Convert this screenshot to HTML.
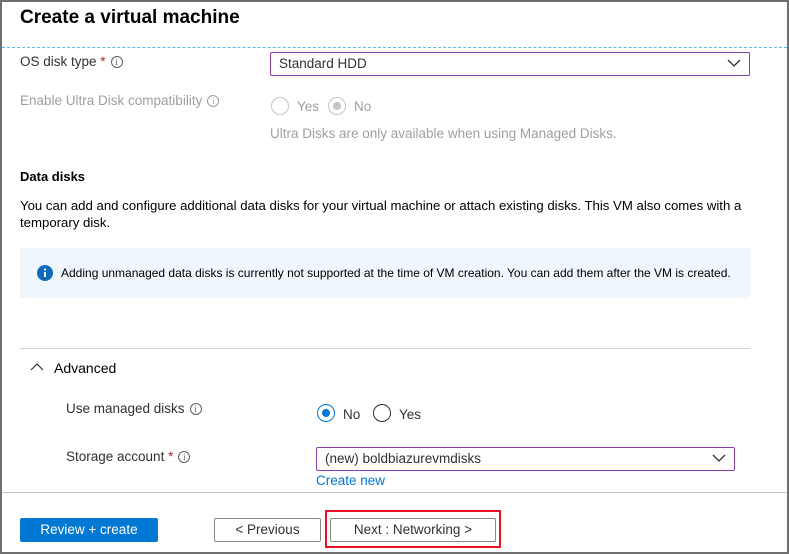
<!DOCTYPE html>
<html><head><style>
*{margin:0;padding:0;box-sizing:border-box}
body{width:789px;height:554px;overflow:hidden;background:#fff;font-family:"Liberation Sans",sans-serif;font-size:13.5px;color:#323130;position:relative}
.frame{position:absolute;left:0;top:0;width:789px;height:554px;border:2px solid #6e6e6e;border-top-width:2px}
.a{position:absolute;white-space:nowrap}
.info{display:inline-block;width:12px;height:12px;border:1px solid #605e5c;border-radius:50%;font-size:9px;line-height:10px;text-align:center;color:#605e5c;vertical-align:1px;margin-left:5px;font-family:"Liberation Serif",serif}
.dd{position:absolute;border:1px solid #8a3fa8;border-radius:2px;padding-left:8px;line-height:21px}
.chev{position:absolute;right:8px;top:5px}
.radio{position:absolute;width:18px;height:18px;border:1px solid #323130;border-radius:50%}
.btn{position:absolute;height:24px;border:1px solid #8a8886;border-radius:2px;text-align:center;line-height:22px;font-size:13.5px;color:#323130}
</style></head><body>
<div class="frame"></div>
<div class="a" style="left:20px;top:7px;font-size:19px;font-weight:bold;color:#000">Create a virtual machine</div>
<div class="a" style="left:2px;top:47px;width:785px;border-top:1px dashed #5bbde3"></div>

<div class="a" style="left:20px;top:54px">OS disk type <span style="color:#a4262c">*</span><span class="info">i</span></div>
<div class="dd" style="left:270px;top:52px;width:480px;height:24px">Standard HDD<svg class="chev" width="14" height="10"><path d="M1 2l6 6 6-6" fill="none" stroke="#323130" stroke-width="1.3"/></svg></div>

<div class="a" style="left:20px;top:93px;color:#a19f9d">Enable Ultra Disk compatibility<span class="info" style="border-color:#a19f9d;color:#a19f9d">i</span></div>
<div class="radio" style="left:271px;top:97px;border-color:#c8c6c4"></div>
<div class="a" style="left:297px;top:99px;color:#a19f9d">Yes</div>
<div class="radio" style="left:328px;top:97px;border-color:#c8c6c4"><div style="position:absolute;left:4px;top:4px;width:8px;height:8px;border-radius:50%;background:#c8c6c4"></div></div>
<div class="a" style="left:354px;top:99px;color:#a19f9d">No</div>
<div class="a" style="left:270px;top:126px;color:#a19f9d">Ultra Disks are only available when using Managed Disks.</div>

<div class="a" style="left:20px;top:169px;font-weight:bold;font-size:13px;color:#000">Data disks</div>
<div class="a" style="left:20px;top:197px;font-size:13.2px;line-height:17px;color:#000">You can add and configure additional data disks for your virtual machine or attach existing disks. This VM also comes with a<br>temporary disk.</div>

<div class="a" style="left:20px;top:248px;width:730px;height:50px;background:#eff6fc"></div>
<svg class="a" style="left:37px;top:265px" width="16" height="16"><circle cx="8" cy="8" r="8" fill="#0f6cbd"/><rect x="7" y="7" width="2" height="5" fill="#fff"/><circle cx="8" cy="4.5" r="1.1" fill="#fff"/></svg>
<div class="a" style="left:61px;top:266px;font-size:12px;color:#000">Adding unmanaged data disks is currently not supported at the time of VM creation. You can add them after the VM is created.</div>

<div class="a" style="left:20px;top:348px;width:730px;border-top:1px solid #d2d0ce"></div>
<svg class="a" style="left:30px;top:362px" width="14" height="9"><path d="M1 8l6-6 6 6" fill="none" stroke="#323130" stroke-width="1.2"/></svg>
<div class="a" style="left:54px;top:360px;font-size:14px;color:#000">Advanced</div>

<div class="a" style="left:66px;top:401px">Use managed disks<span class="info">i</span></div>
<div class="radio" style="left:317px;top:404px;border-color:#0078d4"><div style="position:absolute;left:4px;top:4px;width:8px;height:8px;border-radius:50%;background:#0078d4"></div></div>
<div class="a" style="left:343px;top:407px">No</div>
<div class="radio" style="left:373px;top:404px"></div>
<div class="a" style="left:399px;top:407px">Yes</div>

<div class="a" style="left:66px;top:449px">Storage account <span style="color:#a4262c">*</span><span class="info">i</span></div>
<div class="dd" style="left:316px;top:447px;width:419px;height:24px">(new) boldbiazurevmdisks<svg class="chev" width="14" height="10"><path d="M1 2l6 6 6-6" fill="none" stroke="#323130" stroke-width="1.3"/></svg></div>
<div class="a" style="left:316px;top:473px;color:#0078d4">Create new</div>

<div class="a" style="left:2px;top:492px;width:785px;border-top:1px solid #c8c6c4"></div>
<div class="btn" style="left:20px;top:518px;width:138px;background:#0078d4;border-color:#0078d4;color:#fff">Review + create</div>
<div class="btn" style="left:214px;top:518px;width:107px">&lt; Previous</div>
<div class="a" style="left:325px;top:510px;width:176px;height:38px;border:2px solid #e81123"></div>
<div class="btn" style="left:330px;top:518px;width:166px">Next : Networking &gt;</div>
</body></html>
